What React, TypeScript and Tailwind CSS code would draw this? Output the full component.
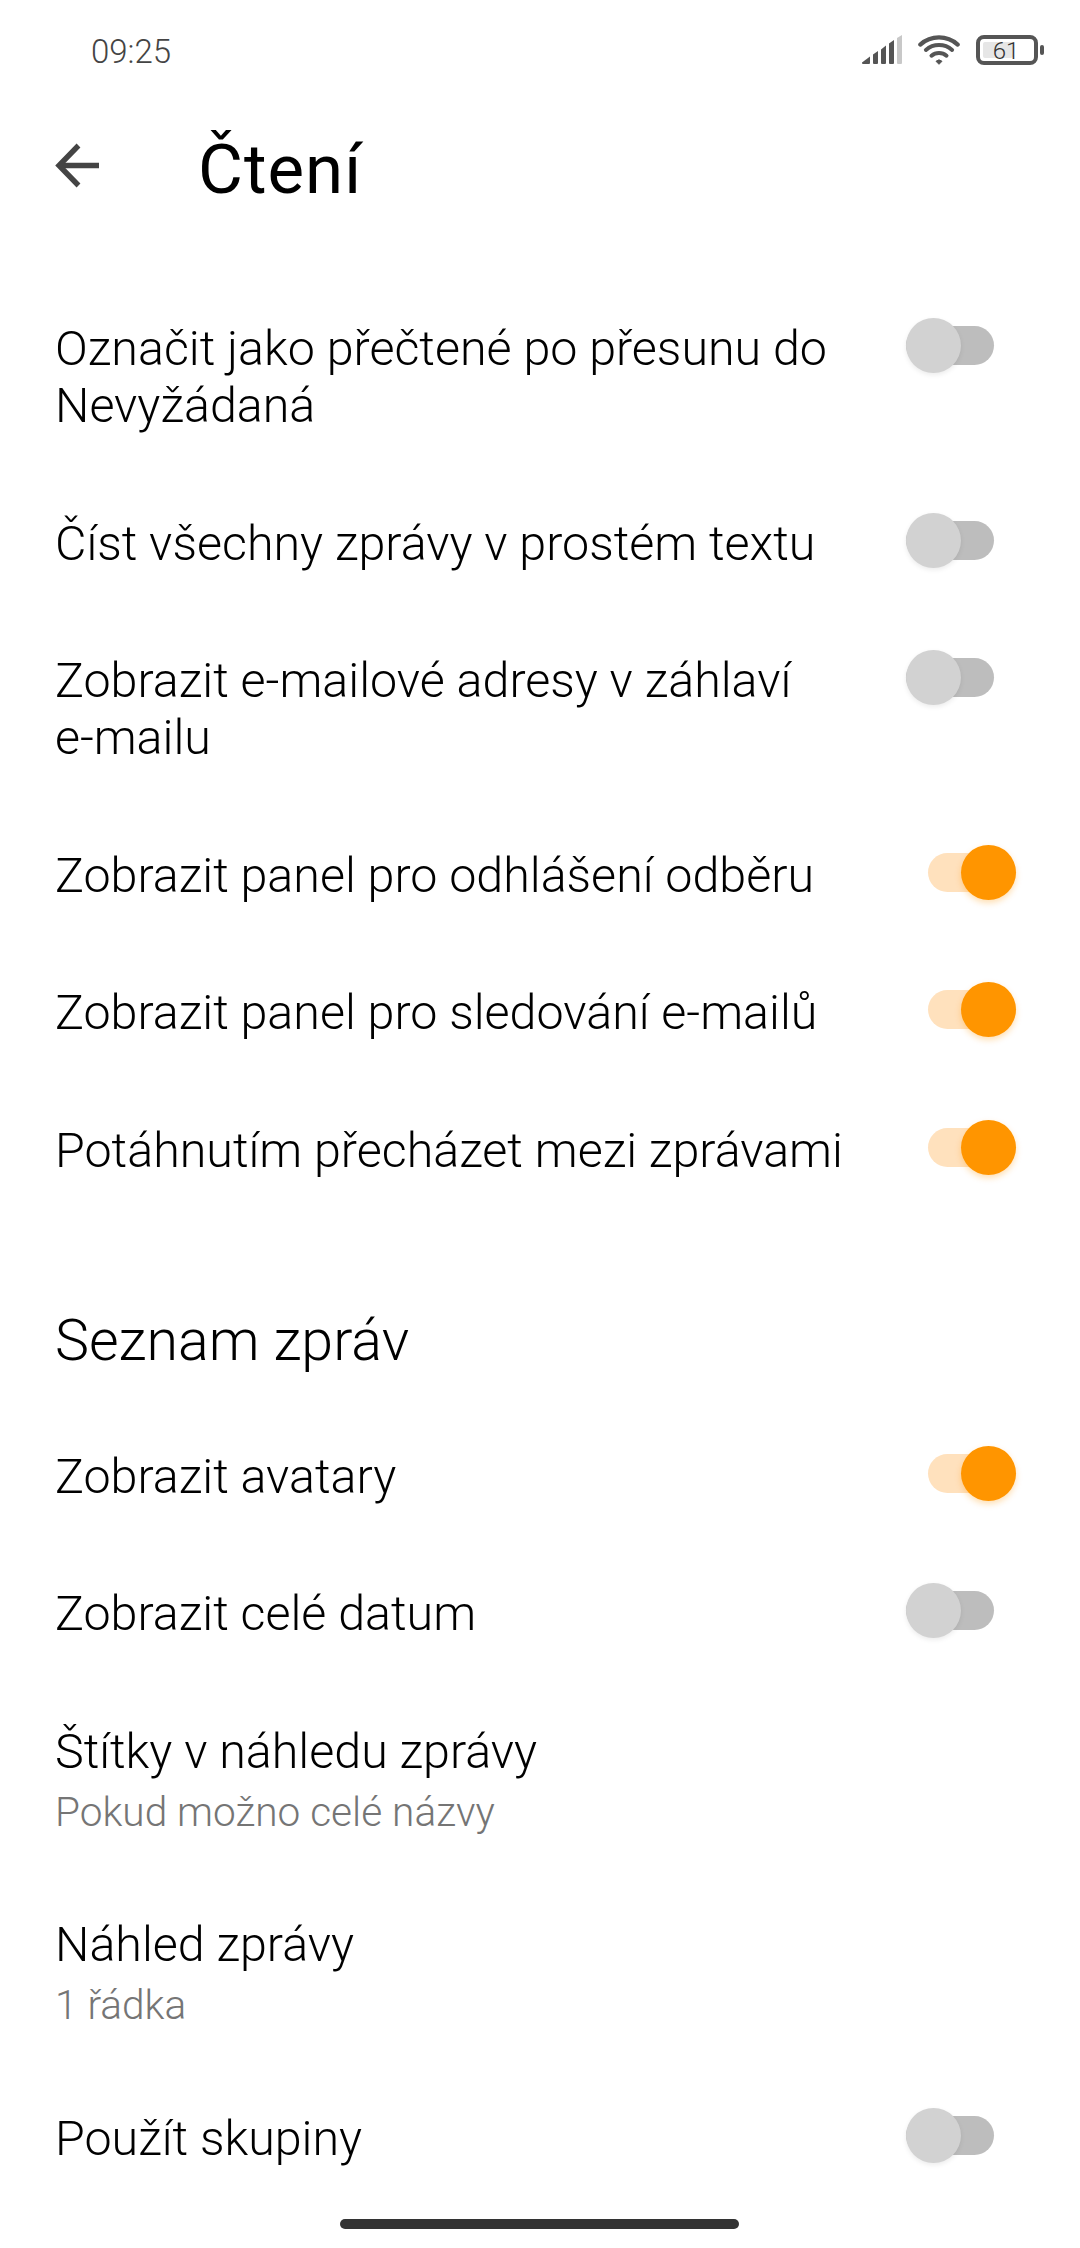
import clsx from 'clsx';

type Setting = {
  title: string;
  summary?: string;
  on?: boolean;
};

const READING: Setting[] = [
  { title: 'Označit jako přečtené po přesunu do Nevyžádaná', on: false },
  { title: 'Číst všechny zprávy v prostém textu', on: false },
  // non-breaking hyphen keeps "e-mailu" together on the second line
  { title: 'Zobrazit e-mailové adresy v záhlaví e‑mailu', on: false },
  { title: 'Zobrazit panel pro odhlášení odběru', on: true },
  { title: 'Zobrazit panel pro sledování e-mailů', on: true },
  { title: 'Potáhnutím přecházet mezi zprávami', on: true },
];

const MESSAGE_LIST: Setting[] = [
  { title: 'Zobrazit avatary', on: true },
  { title: 'Zobrazit celé datum', on: false },
  { title: 'Štítky v náhledu zprávy', summary: 'Pokud možno celé názvy' },
  { title: 'Náhled zprávy', summary: '1 řádka' },
  { title: 'Použít skupiny', on: false },
];

export default function App() {
  return (
    <div className="flex h-[2248px] w-[1080px] flex-col overflow-hidden bg-white font-['Roboto',sans-serif] font-light text-black">
      <StatusBar />
      <header className="flex h-[134px] items-start pt-[29px] pl-[55px]">
        <div className="pt-[14px]">
          <BackArrow />
        </div>
        <h1 className="ml-[98px] pt-px text-[69px] leading-[80px] font-normal tracking-[1px]">
          Čtení
        </h1>
      </header>
      <main className="flex grow flex-col pt-[46px]">
        {READING.map((s) => (
          <SettingRow key={s.title} setting={s} />
        ))}
        <h2 className="mt-[87px] mb-[31.5px] pl-[55px] text-[57.3px] leading-[70px]">
          Seznam zpráv
        </h2>
        {MESSAGE_LIST.map((s) => (
          <SettingRow key={s.title} setting={s} />
        ))}
      </main>
      <div className="mb-[19px] ml-[340px] h-[10px] w-[399px] shrink-0 rounded-full bg-[#333333]" />
    </div>
  );
}

function SettingRow({ setting }: { setting: Setting }) {
  const { title, summary, on } = setting;
  return (
    <div className="flex shrink-0 items-start py-[40.25px] pl-[55px]">
      <div className="w-[800px]">
        <div className="text-[48.4px] leading-[57px]">{title}</div>
        {summary && (
          <div className="mt-[8px] text-[40.6px] leading-[48px] text-[#757575]">
            {summary}
          </div>
        )}
      </div>
      {on !== undefined && <Toggle on={on} />}
    </div>
  );
}

function Toggle({ on }: { on: boolean }) {
  return (
    <div
      role="switch"
      aria-checked={on}
      className={clsx(
        'mt-[6px] flex h-[39px] w-[88px] shrink-0 items-center rounded-full',
        on
          ? 'ml-[73px] justify-end bg-[#ffe1bd]'
          : 'ml-[51px] justify-start bg-[#bdbdbd]',
      )}
    >
      <div
        className={clsx(
          'size-[55px] shrink-0 rounded-full',
          on
            ? 'bg-[#ff9500] shadow-[0_3px_6px_rgba(255,149,0,0.3)]'
            : 'bg-[#d2d2d2] shadow-[0_2px_5px_rgba(0,0,0,0.08)]',
        )}
      />
    </div>
  );
}

function StatusBar() {
  return (
    <div className="flex h-[100px] items-center pr-[36px] pl-[91px]">
      <div className="grow pt-[3px] text-[33px] leading-[40px] text-[#444444]">
        09:25
      </div>
      <Signal />
      <Wifi />
      <Battery level={61} />
    </div>
  );
}

function Signal() {
  return (
    <svg width="40" height="30" viewBox="0 0 40 30" className="mr-[16px]" fill="#555555">
      <path d="M0 27.500 L8 21.500 V28 Q8 29 7 29 H1 Q0 29 0 28Z" />
      <path d="M11 19.500 L16 16 V28 Q16 29 15 29 H12 Q11 29 11 28Z" />
      <path d="M19 14.500 L24 10.500 V28 Q24 29 23 29 H20 Q19 29 19 28Z" />
      <path d="M27 8.500 L32 5 V28 Q32 29 31 29 H28 Q27 29 27 28Z" />
      <path d="M35 3 L40 0 V28 Q40 29 39 29 H36 Q35 29 35 28Z" fill="#c8c8c8" />
    </svg>
  );
}

function Wifi() {
  return (
    <svg width="42" height="30" viewBox="0 0 42 30" className="mr-[16px]" fill="none" stroke="#555555">
      <path d="M2.300 9.600 A28 28 0 0 1 39.700 9.600" strokeWidth="4.200" strokeLinecap="round" />
      <path d="M7.900 15 A20 20 0 0 1 34.100 15" strokeWidth="4" strokeLinecap="round" />
      <path d="M13.500 20.700 A11.500 11.500 0 0 1 28.500 20.700" strokeWidth="4" strokeLinecap="round" />
      <path d="M21 29.300 L18 26.300 Q21 23.300 24 26.300Z" fill="#555555" strokeWidth="1" strokeLinejoin="round" />
    </svg>
  );
}

function Battery({ level }: { level: number }) {
  return (
    <div className="flex items-center">
      <div className="relative flex h-[30px] w-[62px] items-center justify-center rounded-[8px] border-4 border-[#555555]">
        <div className="absolute top-[3px] left-[3px] h-[16px] w-[30px] rounded-[2px] bg-[#e6e6e6]" />
        <span className="relative pt-[2px] pr-[2px] text-[24px] leading-[24px] text-[#333333]">
          {level}
        </span>
      </div>
      <div className="ml-[2px] h-[10px] w-[4px] rounded-full bg-[#555555]" />
    </div>
  );
}

function BackArrow() {
  return (
    <svg width="45" height="45" viewBox="0 0 45 45" fill="none" stroke="#444444" strokeWidth="5.400">
      <path d="M44 22.500 H4" />
      <path d="M23.500 2.500 L4 22.500 L23.500 42.500" />
    </svg>
  );
}
